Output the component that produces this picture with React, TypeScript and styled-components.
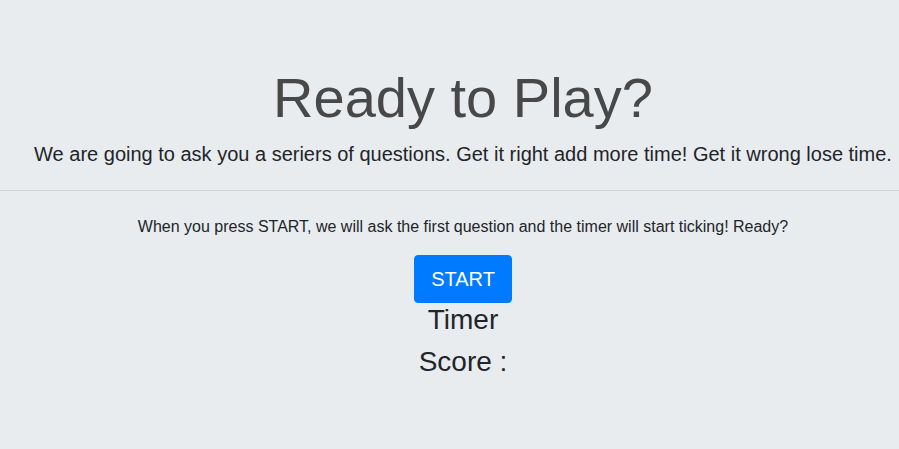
import React, { FC } from "react";
import styled, { createGlobalStyle } from "styled-components";

const GlobalStyle = createGlobalStyle`
    html, body {
        margin: 0;
        padding: 0;
        overflow-x: hidden;
        background: #e9ecef;
    }
    body {
        font-family: "Liberation Sans", Arial, sans-serif;
        color: #212529;
    }
`;

const Jumbotron = styled.div`
    background: #e9ecef;
    padding: 64px 0 64px;
    min-height: 449px;
    box-sizing: border-box;
`;

const Centered = styled.div`
    width: 926px;
    text-align: center;
`;

const Title = styled.h1`
    margin: 0 0 8px;
    font-size: 56px;
    font-weight: 400;
    line-height: 1.2;
    color: #484848;
`;

const Lead = styled.p`
    margin: 0;
    font-size: 20px;
    line-height: 1.5;
    white-space: nowrap;
`;

const Rule = styled.hr`
    margin: 21px 0 24px;
    border: 0;
    border-top: 1px solid rgba(0, 0, 0, 0.1);
    width: 899px;
`;

const Intro = styled.p`
    margin: 0 0 16px;
    font-size: 16px;
    line-height: 24px;
`;

const StartButton = styled.button`
    font-family: inherit;
    font-size: 20px;
    line-height: 1.5;
    padding: 8px 16px;
    color: #fff;
    background: #007bff;
    border: 1px solid #007bff;
    border-radius: 4px;
    cursor: pointer;
`;

const Stat = styled.h3`
    margin: 0 0 8px;
    font-size: 28px;
    font-weight: 400;
    line-height: 1.2;
`;

const App: FC = () => {
    return (
        <>
            <GlobalStyle />
            <Jumbotron>
                <Centered>
                    <Title>Ready to Play?</Title>
                    <Lead>We are going to ask you a seriers of questions. Get it right add more time! Get it wrong lose time.</Lead>
                </Centered>
                <Rule />
                <Centered>
                    <Intro>When you press START, we will ask the first question and the timer will start ticking! Ready?</Intro>
                    <StartButton>START</StartButton>
                    <Stat>Timer</Stat>
                    <Stat>Score :</Stat>
                </Centered>
            </Jumbotron>
        </>
    );
};

export default App;
